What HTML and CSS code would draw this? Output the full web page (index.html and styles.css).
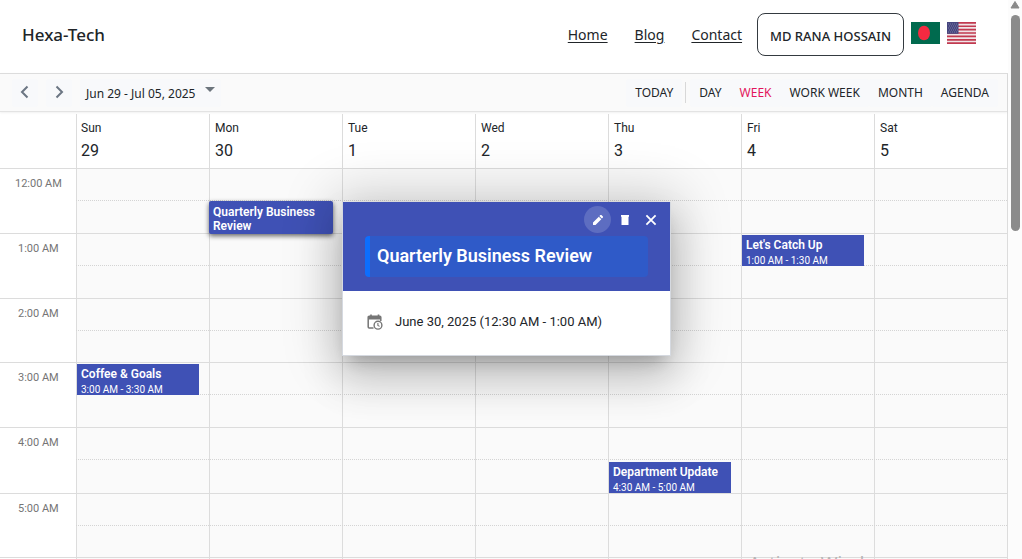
FILE: index.html
```html
<!DOCTYPE html>
<html lang="en">
<head>
<meta charset="utf-8">
<meta name="viewport" content="width=device-width, initial-scale=1">
<title>Hexa-Tech</title>
<link rel="stylesheet" href="styles.css">
</head>
<body>
<div class="app">
  <div class="page">
    <header class="site-header">
      <div class="brand">Hexa-Tech</div>
      <nav class="site-nav">
        <a href="#home">Home</a>
        <a href="#blog">Blog</a>
        <a href="#contact">Contact</a>
      </nav>
      <button class="user-button" type="button">MD RANA HOSSAIN</button>
      <div class="languages">
        <button class="flag" type="button" aria-label="Bangla">
          <svg viewBox="0 0 29 22" preserveAspectRatio="none"><rect width="29" height="22" fill="#006a4e"/><ellipse cx="13" cy="11" rx="6" ry="7.300" fill="#f42a41"/></svg>
        </button>
        <button class="flag" type="button" aria-label="English">
          <svg viewBox="0 0 29 22" preserveAspectRatio="none"><rect width="29" height="22" fill="#f0e4e7"/><path d="M0 .85h29M0 4.250h29M0 7.650h29M0 11h29M0 14.400h29M0 17.800h29M0 21.150h29" stroke="#c13a50" stroke-width="1.700"/><rect width="11.500" height="11.800" fill="#46467f"/><path d="M1 2h10M2 4h9M1 6h10M2 8h9M1 10h10" stroke="#8585ad" stroke-width=".8" stroke-dasharray="1 1"/></svg>
        </button>
      </div>
    </header>

    <main class="scheduler">
      <div class="toolbar">
        <button class="nav-button" type="button" aria-label="Previous"><svg viewBox="0 0 16 16"><path d="M10.500 2.500 5 8l5.500 5.500"/></svg></button>
        <button class="nav-button" type="button" aria-label="Next"><svg viewBox="0 0 16 16"><path d="M5.500 2.500 11 8l-5.500 5.500"/></svg></button>
        <button class="range-button" type="button">Jun 29 - Jul 05, 2025<span class="caret"></span></button>
        <div class="views">
          <button class="view" type="button">TODAY</button>
          <span class="separator"></span>
          <button class="view" type="button">DAY</button>
          <button class="view active" type="button">WEEK</button>
          <button class="view" type="button">WORK WEEK</button>
          <button class="view" type="button">MONTH</button>
          <button class="view" type="button">AGENDA</button>
        </div>
      </div>

      <div class="day-heads">
        <div></div>
        <div class="day-head">Sun<span>29</span></div>
        <div class="day-head">Mon<span>30</span></div>
        <div class="day-head">Tue<span>1</span></div>
        <div class="day-head">Wed<span>2</span></div>
        <div class="day-head">Thu<span>3</span></div>
        <div class="day-head">Fri<span>4</span></div>
        <div class="day-head">Sat<span>5</span></div>
      </div>

      <div class="week">
        <div class="day sun"></div><div class="day mon"></div><div class="day tue"></div><div class="day wed"></div><div class="day thu"></div><div class="day fri"></div><div class="day sat"></div>

        <div class="hour h0">12:00 AM</div><div class="half h0"></div>
        <div class="hour h1">1:00 AM</div><div class="half h1"></div>
        <div class="hour h2">2:00 AM</div><div class="half h2"></div>
        <div class="hour h3">3:00 AM</div><div class="half h3"></div>
        <div class="hour h4">4:00 AM</div><div class="half h4"></div>
        <div class="hour h5">5:00 AM</div><div class="half h5"></div>

        <article class="event review"><h3>Quarterly Business Review</h3></article>
        <article class="event catch-up"><h3>Let's Catch Up</h3><p>1:00 AM - 1:30 AM</p></article>
        <article class="event goals"><h3>Coffee &amp; Goals</h3><p>3:00 AM - 3:30 AM</p></article>
        <article class="event update"><h3>Department Update</h3><p>4:30 AM - 5:00 AM</p></article>
      </div>
    </main>
  </div>

  <div class="scrollbar" aria-hidden="true">
    <svg class="scroll-up" viewBox="0 0 10 8"><path d="M5 .5 9 7H1z" fill="#8a8a8a" stroke="#8a8a8a" stroke-linejoin="round"/></svg>
    <div class="scroll-thumb"></div>
  </div>
</div>

<section class="popup" role="dialog" aria-labelledby="popup-title">
  <div class="popup-head">
    <div class="popup-actions">
      <button class="icon-button focused" type="button" aria-label="Edit"><svg viewBox="0 0 12 12"><path d="M1 8.500V11h2.500l5.800-5.800-2.500-2.500zM7.400 2.100l2.500 2.500 1-1a.8.800 0 0 0 0-1L9.400 1.100a.8.800 0 0 0-1 0z"/></svg></button>
      <button class="icon-button" type="button" aria-label="Delete"><svg viewBox="0 0 12 12"><path d="M2 1h8v1.700H2zM2.500 2.500h7V11h-7z"/></svg></button>
      <button class="icon-button" type="button" aria-label="Close"><svg viewBox="0 0 12 12"><path d="m1.400 1.400 9.200 9.200m0-9.200-9.200 9.200" fill="none" stroke="#fff" stroke-width="1.800"/></svg></button>
    </div>
    <h2 class="popup-title" id="popup-title">Quarterly Business Review</h2>
  </div>
  <div class="popup-body">
    <svg class="date-icon" viewBox="0 0 16 16"><path d="M1.500 2.500h12v3h-12z" fill="#757575"/><path d="M4 .5v3M11.500 .5v3" stroke="#757575" stroke-width="1.600"/><path d="M6.500 14H2.200a1 1 0 0 1-1-1V3.300a1 1 0 0 1 1-1h10.600a1 1 0 0 1 1 1V7" fill="none" stroke="#757575" stroke-width="1.500"/><circle cx="11" cy="11.200" r="3.900" fill="#fff" stroke="#757575" stroke-width="1.400"/><path d="M10.900 8.900v2.500l1.700 1" fill="none" stroke="#757575" stroke-width="1.100"/></svg>
    <span>June 30, 2025 (12:30 AM - 1:00 AM)</span>
  </div>
</section>
<div class="watermark">Activate Windows</div>
</body>
</html>
```
FILE: styles.css
```css
* { box-sizing: border-box; }
body {
  margin: 0;
  height: 100vh;
  overflow: hidden;
  position: relative;
  background: #fff;
  color: #212529;
  font-family: "Noto Sans", "Open Sans", sans-serif;
}
button { margin: 0; padding: 0; border: 0; background: none; color: inherit; font: inherit; cursor: pointer; }
h2, h3, p { margin: 0; }
svg { display: block; }

.app { display: flex; height: 100%; }
.page { flex: 1; min-width: 0; overflow: hidden; }

.site-header { display: flex; align-items: center; height: 73px; padding: 0 32px 4px 22px; }
.brand { flex: 1; font-size: 17px; font-weight: 500; }
.site-nav { display: flex; gap: 27px; margin-right: 15px; font-size: 14px; }
.site-nav a { color: #212529; text-underline-offset: 2px; }
.user-button {
  height: 43px;
  padding: 2px 12px 0;
  border: 1px solid #343a40;
  border-radius: 8px;
  font-size: 13px;
  font-weight: 500;
}
.languages { display: flex; gap: 7px; margin: 0 0 3px 7px; }
.flag svg { width: 29px; height: 22px; }

.scheduler { border-right: 1px solid #dcdcdc; font-family: Roboto, sans-serif; }
.toolbar {
  display: flex;
  align-items: center;
  height: 39px;
  padding: 0 9px 0 12px;
  border-top: 1px solid #dcdcdc;
  border-bottom: 1px solid #e3e3e3;
  background: #fafafa;
  box-shadow: 0 1px 2px #0000000f;
  font-family: "Noto Sans", "Open Sans", sans-serif;
  font-size: 12px;
}
.toolbar button { height: 28px; border-radius: 3px; background: #f8f9fb; }
.nav-button { width: 26px; margin-right: 8px; }
.nav-button svg { width: 16px; height: 16px; margin: 0 auto 2px; fill: none; stroke: #6c7683; stroke-width: 2; }
.toolbar .range-button { display: flex; align-items: center; gap: 9px; padding: 2px 6px 0; }
.caret { margin-bottom: 9px; border: 5px solid transparent; border-top-color: #6c757d; border-bottom: 0; }
.views { display: flex; align-items: center; margin-left: auto; }
.view { padding: 0 9px; }
.toolbar .active { color: #e3165b; }
.separator { width: 1px; height: 21px; margin: 0 4px 0 3px; background: #d8d8d8; }

.day-heads, .week { display: grid; grid-template-columns: 76px repeat(7, 1fr); }
.day-heads { margin-top: 2px; border-bottom: 1px solid #dcdcdc; }
.day-head { height: 54px; padding: 6px 4px; border-left: 1px solid #dcdcdc; font-size: 12px; line-height: 16px; }
.day-head + .day-head { padding-left: 5px; }
.day-head span { display: block; margin-top: 3px; font-size: 16px; line-height: 24px; }

.week { height: 453px; grid-template-rows: repeat(14, 1fr); }
.day { grid-row: 1 / -1; border-left: 1px solid #dcdcdc; background: #fafafa; }
.sun { grid-column: 2; } .mon { grid-column: 3; } .tue { grid-column: 4; } .wed { grid-column: 5; }
.thu { grid-column: 6; } .fri { grid-column: 7; } .sat { grid-column: 8; }
.hour { grid-column: 1 / -1; border-bottom: 1px solid #dcdcdc; padding-top: 8px; font-size: 11px; line-height: 14px; color: #757575; }
.hour { text-indent: 18px; }
.hour.h0 { text-indent: 15px; }
.half { grid-column: 2 / -1; align-self: start; height: 32px; border-bottom: 1px dotted #d4d4d4; }
.h0 { grid-row: 1 / 3; } .h1 { grid-row: 3 / 5; } .h2 { grid-row: 5 / 7; }
.h3 { grid-row: 7 / 9; } .h4 { grid-row: 9 / 11; } .h5 { grid-row: 11 / 13; }

.event { width: 92%; height: 31px; margin: 1px; padding: 3px 4px; overflow: hidden; background: #3f51b5; color: #fff; }
.event h3 { font-size: 12px; font-weight: 600; line-height: 14px; }
.event p { margin-top: 3px; font-size: 10px; line-height: 12px; }
.review { grid-area: 2 / 3; width: 124px; height: 33px; margin: 0; border-radius: 2px; padding: 4px; box-shadow: 0 2px 5px #0009; }
.catch-up { grid-area: 3 / 7; }
.goals { grid-area: 7 / 2; }
.update { grid-area: 10 / 6; }

.popup {
  position: absolute;
  left: 342px;
  top: 202px;
  width: 329px;
  border: 1px solid #d5d9e0;
  border-top: 0;
  background: #fff;
  font-family: Roboto, sans-serif;
  box-shadow: 0 11px 15px -7px #0003, 0 24px 38px 3px #00000024, 0 0 50px 8px #0000002e;
}
.popup-head { padding: 4px 22px 14px; background: #3f51b5; color: #fff; }
.popup-actions { display: flex; justify-content: flex-end; margin-right: -15px; }
.icon-button { display: grid; place-items: center; width: 27px; height: 27px; border-radius: 50%; }
.icon-button:last-child { width: 25px; }
.icon-button svg { width: 12px; height: 12px; fill: #fff; }
.focused { background: #ffffff29; }
.popup-title {
  margin-top: 3px;
  padding: 7px 7px 9px;
  border-left: 5px solid #0d6efd;
  border-radius: 4px;
  background: #2f5ac8;
  font-size: 18px;
  font-weight: 600;
  line-height: 25px;
}
.popup-body { display: flex; align-items: center; gap: 12px; height: 64px; padding: 0 24px 4px; font-size: 13px; }
.date-icon { width: 16px; height: 16px; margin-top: 2px; }

.scrollbar { display: flex; flex-direction: column; align-items: center; width: 14px; padding-top: 1px; background: #fcfcfc; }
.scroll-up { width: 10px; height: 8px; }
.scroll-thumb { width: 9px; height: 216px; margin-top: 6px; border-radius: 5px; background: #8b8b8b; }

.watermark { position: absolute; left: 749px; top: 100%; margin-top: -9px; font-size: 18px; line-height: 26px; color: #b5b5b5; }
```
